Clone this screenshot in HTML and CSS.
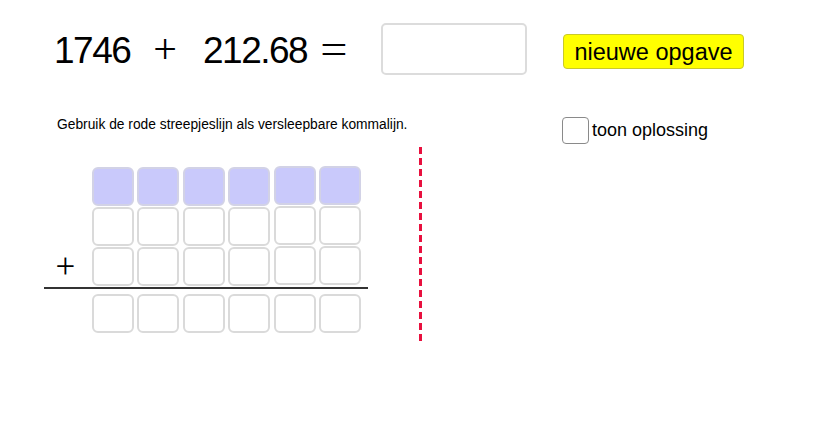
FILE: index.html
```html
<!DOCTYPE html>
<html lang="nl">
<head>
    <meta charset="UTF-8">
    <title>Kommagetallen optellen</title>
    <link rel="stylesheet" href="styles.css">
</head>
<body>

    <div class="page">

        <div class="top-row">
            <div class="equation">
                <span class="num">1746</span>
                <span class="op plus">+</span>
                <span class="num">212.68</span>
                <span class="op eq">=</span>
            </div>
            <input type="text" class="answer">
            <button class="new-task">nieuwe opgave</button>
        </div>

        <div class="info-row">
            <p class="hint">Gebruik de rode streepjeslijn als versleepbare kommalijn.</p>
            <label class="toggle">
                <span class="box"></span>
                toon oplossing
            </label>
        </div>

        <div class="sum">
            <span></span>
            <div class="cell filled"></div>
            <div class="cell filled"></div>
            <div class="cell filled"></div>
            <div class="cell filled"></div>
            <div class="cell filled up"></div>
            <div class="cell filled up"></div>

            <span></span>
            <div class="cell"></div>
            <div class="cell"></div>
            <div class="cell"></div>
            <div class="cell"></div>
            <div class="cell up"></div>
            <div class="cell up"></div>

            <span class="sign">+</span>
            <div class="cell"></div>
            <div class="cell"></div>
            <div class="cell"></div>
            <div class="cell"></div>
            <div class="cell up"></div>
            <div class="cell up"></div>

            <div class="rule"></div>

            <span></span>
            <div class="cell"></div>
            <div class="cell"></div>
            <div class="cell"></div>
            <div class="cell"></div>
            <div class="cell"></div>
            <div class="cell"></div>
        </div>

        <!-- draggable decimal line -->
        <div class="comma-line"></div>

    </div>

</body>
</html>
```

FILE: styles.css
```css
body {
    margin: 0;
    font-family: "Liberation Sans", Arial, sans-serif;
    color: #000;
    background: #fff;
}
.page {
    position: relative;
    width: 820px;
    height: 421px;
    padding-top: 23px;
    box-sizing: border-box;
}
.top-row {
    display: flex;
    align-items: flex-start;
    height: 52px;
}
.equation {
    display: flex;
    align-items: baseline;
    line-height: 52px;
    padding-left: 54px;
    width: 381px;
    flex-shrink: 0;
    box-sizing: border-box;
}
.num {
    font-size: 37px;
    letter-spacing: -1.5px;
}
.op {
    font-family: "Liberation Serif", serif;
    font-size: 42px;
}
.plus {
    margin: 0 26px 0 23px;
}
.eq {
    margin-left: 15px;
    transform: scaleX(1.15);
}
.answer {
    width: 146px;
    height: 52px;
    box-sizing: border-box;
    border: 2px solid #dcdcdc;
    border-radius: 5px;
    padding: 0;
    margin: 0;
}
.new-task {
    margin: 11px 0 0 36px;
    width: 181px;
    height: 35px;
    box-sizing: border-box;
    background: #ffff00;
    border: 1px solid #c9c92a;
    border-radius: 4px;
    font-family: "Liberation Sans", Arial, sans-serif;
    font-size: 23.5px;
    color: #000;
    padding: 0;
    line-height: 32px;
}
.info-row {
    display: flex;
    align-items: flex-start;
    margin-top: 42px;
}
.hint {
    margin: 0;
    padding-left: 57px;
    width: 562px;
    flex-shrink: 0;
    box-sizing: border-box;
    font-size: 13.8px;
    line-height: 16px;
}
.toggle {
    display: flex;
    align-items: center;
    font-size: 18px;
    line-height: 27px;
}
.box {
    width: 27px;
    height: 27px;
    box-sizing: border-box;
    border: 1.5px solid #8a8a8a;
    border-radius: 4px;
    margin-right: 3px;
}
.sum {
    display: grid;
    grid-template-columns: 44.6px repeat(6, 42px);
    grid-template-rows: 39px 39px 39px 6px 39px;
    column-gap: 3.4px;
    row-gap: 1px;
    margin: 22.5px 0 0 44px;
    width: 324px;
}
.cell {
    box-sizing: border-box;
    border: 2px solid #dadada;
    border-radius: 6px;
    background: #fff;
}
.cell.filled {
    background: #c9c9fb;
    border-color: #d2d2e6;
}
.cell.up {
    margin-top: -1px;
    margin-bottom: 1px;
}
.sign {
    font-family: "Liberation Serif", serif;
    font-size: 35px;
    line-height: 39px;
    text-align: center;
    padding-right: 2px;
}
.rule {
    grid-column: 1 / -1;
    width: 324px;
    height: 2px;
    background: #333;
    align-self: start;
}
.comma-line {
    position: absolute;
    left: 419px;
    top: 147px;
    width: 3px;
    height: 194px;
    background: repeating-linear-gradient(to bottom, #e8103e 0 7px, transparent 7px 11px);
}
```
